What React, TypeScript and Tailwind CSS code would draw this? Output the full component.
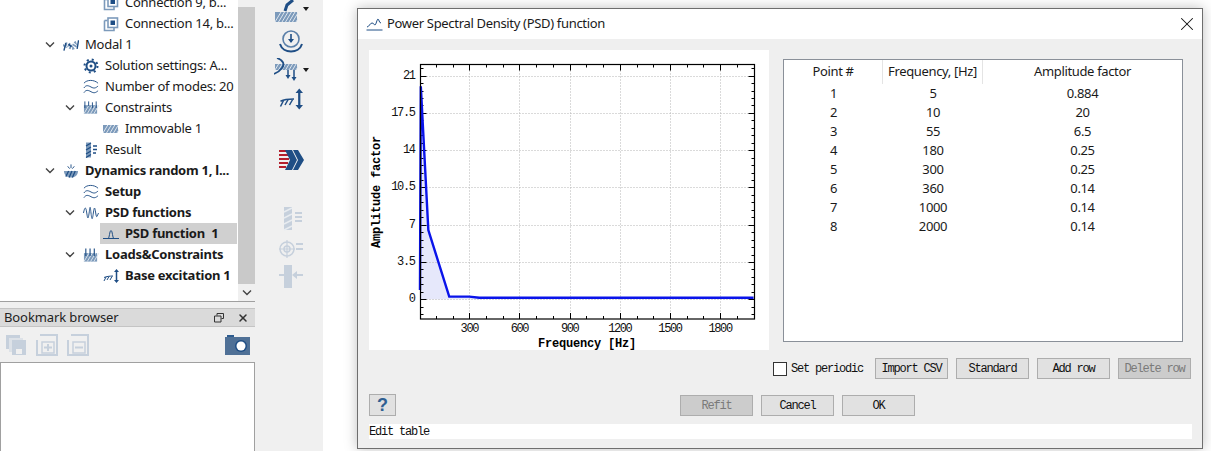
import React from 'react';
import { X } from 'lucide-react';

const BLUE = '#1f4e85';
const MID = '#7c9abb';
const PALE = '#c6d0dc';

const Hatch = ({ x, y, w, h }: { x: number; y: number; w: number; h: number }) => {
  const lines = [];
  for (let i = 0; i < w; i += 3.5) {
    lines.push(<line key={i} x1={x + i} y1={y + h} x2={x + i + h * 0.6} y2={y} stroke="#dfe6ee" strokeWidth="1" />);
  }
  return (
    <g>
      <rect x={x} y={y} width={w} height={h} fill={MID} />
      {lines}
    </g>
  );
};

const ConnectionIcon = () => (
  <svg width="16" height="16" viewBox="0 0 16 16" fill="none">
    <path d="M1.500 4.500v10h9.500v-3" stroke={MID} strokeWidth="1.6" />
    <path d="M1.500 4.500h3" stroke={MID} strokeWidth="1.6" />
    <rect x="5" y="2" width="9.500" height="9.500" stroke={MID} strokeWidth="1.600" />
    <rect x="7.500" y="4.500" width="4.500" height="4.500" fill={BLUE} />
  </svg>
);
const ModalIcon = () => (
  <svg width="17" height="16" viewBox="0 0 17 16" fill="none">
    <path d="M1.500 10C3 7 5 7 7 9s4 2 5 0 2-3 3-3" stroke={MID} strokeWidth="5" strokeDasharray="1.500 1" />
    <path d="M1 14l2-8M15 12l1.500-9" stroke={BLUE} strokeWidth="1.500" />
    <path d="M6 7l3 3" stroke={BLUE} strokeWidth="2" />
  </svg>
);
const GearIcon = () => (
  <svg width="16" height="16" viewBox="0 0 16 16" fill="none">
    <circle cx="8" cy="8" r="4.500" stroke={BLUE} strokeWidth="2" />
    <circle cx="8" cy="8" r="6.500" stroke={BLUE} strokeWidth="2" strokeDasharray="2 3.100" />
    <circle cx="8" cy="8" r="1.500" fill={BLUE} />
  </svg>
);
const WavesIcon = () => (
  <svg width="17" height="16" viewBox="0 0 17 16" fill="none" stroke={BLUE} strokeWidth="1">
    <path d="M1 4C4 0 12 0 16 4" />
    <path d="M1 9c2-3 4-3 7.500-1s5 1 7.500-1" />
    <path d="M1 14c2-3 4-3 7.500-1s5 1 7.500-1" />
  </svg>
);
const ConstraintsIcon = () => (
  <svg width="17" height="16" viewBox="0 0 17 16" fill="none">
    <Hatch x={1} y={5} w={14} h={9} />
    <path d="M2 1v7M6 1v5M10 2v6M14 1v7" stroke={BLUE} strokeWidth="1" />
  </svg>
);
const ImmovableIcon = () => (
  <svg width="16" height="16" viewBox="0 0 16 16" fill="none">
    <Hatch x={0} y={4} w={15} h={8} />
  </svg>
);
const ResultIcon = () => (
  <svg width="16" height="16" viewBox="0 0 16 16" fill="none">
    <rect x="3" y="0.500" width="5" height="15" fill={MID} />
    <path d="M3 4l5-3M3 8l5-3M3 12l5-3M3 15.500l5-3" stroke={BLUE} strokeWidth="1.300" />
    <path d="M10 4h4M10 7.500h4M10 11h3" stroke={BLUE} strokeWidth="1.500" />
  </svg>
);
const DynamicsIcon = () => (
  <svg width="17" height="16" viewBox="0 0 17 16" fill="none">
    <path d="M1 8h15c0 4-3 7-7.500 7S1 12 1 8z" fill={MID} />
    <path d="M3 14l3-6M6.500 15l3-7M10 15l3-7" stroke={BLUE} strokeWidth="1.300" />
    <path d="M8.500 1v4M5 3l2 2.500M12 3l-2 2.500" stroke={BLUE} strokeWidth="1" />
  </svg>
);
const PsdWaveIcon = () => (
  <svg width="17" height="16" viewBox="0 0 17 16" fill="none" stroke={BLUE} strokeWidth="1">
    <path d="M0.500 8C2 1 3 1 4 8s1.500 7 2.500 0S7.500-1 8.500 8s1.500 7 2.500 0 1.500-7 2.500 0 1.500 3 3 0" />
  </svg>
);
const PsdPeakIcon = () => (
  <svg width="16" height="16" viewBox="0 0 16 16" fill="none" stroke={BLUE} strokeWidth="1">
    <path d="M0 12.500h16" />
    <path d="M5 12.500c1.500 0 1.500-8 3-8s1.500 8 3 8" />
  </svg>
);
const LoadsIcon = () => (
  <svg width="17" height="16" viewBox="0 0 17 16" fill="none">
    <Hatch x={1} y={6} w={14} h={9} />
    <path d="M3 1v8M7.500 1v8M12 1v8" stroke={BLUE} strokeWidth="1.200" />
  </svg>
);
const BaseIcon = ({ size = 16 }: { size?: number }) => (
  <svg width={size} height={size} viewBox="0 0 16 16" fill="none" stroke={BLUE}>
    <path d="M1 9.500c2-1 6-1.500 9-1.500" strokeWidth="1" />
    <path d="M1 13l2-4M4 12l2-3.500M7 12l2-3.500" strokeWidth="1" />
    <path d="M13.500 3v10" strokeWidth="1.500" />
    <path d="M11 4l2.500-3L16 4zM11 12l2.500 3 2.500-3z" fill={BLUE} stroke="none" />
  </svg>
);

type TreeRow = {
  label: string;
  depth: 0 | 1 | 2;
  open?: boolean;
  bold?: boolean;
  selected?: boolean;
  icon: React.ReactNode;
};

const rows: TreeRow[] = [
  { label: 'Connection 9, b...', depth: 2, icon: <ConnectionIcon /> },
  { label: 'Connection 14, b...', depth: 2, icon: <ConnectionIcon /> },
  { label: 'Modal 1', depth: 0, open: true, icon: <ModalIcon /> },
  { label: 'Solution settings: A...', depth: 1, icon: <GearIcon /> },
  { label: 'Number of modes: 20', depth: 1, icon: <WavesIcon /> },
  { label: 'Constraints', depth: 1, open: true, icon: <ConstraintsIcon /> },
  { label: 'Immovable 1', depth: 2, icon: <ImmovableIcon /> },
  { label: 'Result', depth: 1, icon: <ResultIcon /> },
  { label: 'Dynamics random 1, l...', depth: 0, open: true, bold: true, icon: <DynamicsIcon /> },
  { label: 'Setup', depth: 1, bold: true, icon: <WavesIcon /> },
  { label: 'PSD functions', depth: 1, open: true, bold: true, icon: <PsdWaveIcon /> },
  { label: 'PSD function  1', depth: 2, bold: true, selected: true, icon: <PsdPeakIcon /> },
  { label: 'Loads&Constraints', depth: 1, open: true, bold: true, icon: <LoadsIcon /> },
  { label: 'Base excitation 1', depth: 2, bold: true, icon: <BaseIcon /> },
];

const depthPad = { 0: 'pl-[44px]', 1: 'pl-[64px]', 2: 'pl-[84px]' };

const Chevron = () => (
  <svg width="12" height="8" viewBox="0 0 12 8" fill="none" stroke="#444" strokeWidth="1.400">
    <path d="M2 1.500l4 4 4-4" />
  </svg>
);

const Tree = () => (
  <div className="relative h-[302px] overflow-hidden border-b border-[#a0a0a0] bg-white">
    <div className="-mt-[8px] pr-[18px] font-['Noto_Sans',sans-serif] text-[13px] tracking-[-0.25px] text-[#1a1a1a]">
      {rows.map((r) => (
        <div key={r.label} className={`flex h-[21px] items-center ${depthPad[r.depth]}`}>
          <div className="flex w-[16px] shrink-0 items-center">{r.open && <Chevron />}</div>
          <div className={`flex h-full flex-1 items-center whitespace-pre pl-[3px] ${r.selected ? 'bg-[#d0d0d0]' : ''}`}>
            <span className="flex w-[16px] shrink-0 justify-center">{r.icon}</span>
            <span className={`ml-[6px] ${r.bold ? 'font-bold' : ''}`}>{r.label}</span>
          </div>
        </div>
      ))}
    </div>
    <div className="absolute right-0 top-0 flex h-full w-[17px] flex-col bg-[#f0f0f0]">
      <div className="mt-[7px] h-[277px] bg-[#c9c9c9]" />
      <div className="flex flex-1 items-center justify-center">
        <Chevron />
      </div>
    </div>
  </div>
);

const CopyIcon = () => (
  <svg width="22" height="22" viewBox="0 0 22 22">
    <rect x="1" y="1" width="14" height="14" fill={PALE} />
    <rect x="4" y="4" width="14" height="14" fill="#dde2e8" />
    <rect x="7" y="6" width="14" height="15" fill={PALE} />
    <rect x="11" y="15" width="6" height="5" fill="#f0f0f0" />
  </svg>
);
const BoxIcon = ({ plus }: { plus?: boolean }) => (
  <svg width="22" height="22" viewBox="0 0 22 22" fill="none" stroke={PALE} strokeWidth="2">
    <path d="M4 1h17v20H4" />
    <path d="M1 6v15h3" />
    <path d="M6 8h12v11H6z" strokeWidth="1.500" />
    <path d="M8 13.500h8" strokeWidth="2" />
    {plus && <path d="M12 10v7" strokeWidth="2" />}
  </svg>
);
const CameraIcon = () => (
  <svg width="25" height="20" viewBox="0 0 25 20">
    <rect x="2" y="0" width="7" height="3" fill="#2d5c8f" />
    <rect x="0" y="2" width="25" height="18" fill="#4f7096" />
    <circle cx="16" cy="11" r="6" fill="#1f4e85" />
    <circle cx="16" cy="11" r="4.500" fill="#ffffff" />
  </svg>
);

const BookmarkPanel = () => (
  <div className="flex flex-1 flex-col bg-[#f0f0f0] pt-[6px]">
    <div className="flex h-[19px] items-center justify-between border-y border-[#c4c4c4] bg-[#dadada] pl-[4px] pr-[6px] font-['Noto_Sans',sans-serif] text-[13px] tracking-[-0.1px] text-[#222]">
      <span>Bookmark browser</span>
      <div className="flex items-center gap-[13px]">
        <svg width="10" height="10" viewBox="0 0 10 10" fill="none" stroke="#333">
          <path d="M3 2.500V.500h6.500v5H7.500M.500 3h6.500v6H.500z" />
        </svg>
        <X size={12} strokeWidth={3} color="#333" />
      </div>
    </div>
    <div className="flex h-[35px] items-center pl-[5px] pr-[5px]">
      <CopyIcon />
      <span className="ml-[9px]"><BoxIcon plus /></span>
      <span className="ml-[9px]"><BoxIcon /></span>
      <span className="ml-auto"><CameraIcon /></span>
    </div>
    <div className="flex-1 border border-b-0 border-[#a0a0a0] bg-white" />
  </div>
);

const DropArrow = ({ top }: { top: string }) => (
  <span className={`absolute left-[48px] h-0 w-0 border-x-[3.500px] border-t-[4px] border-x-transparent border-t-[#1a1a1a] ${top}`} />
);

const Toolbar = () => (
  <div className="flex w-[68px] shrink-0 flex-col items-center bg-[#f0f0f0]">
    <div className="relative flex h-[24px] w-full justify-center pr-[7px]">
      <svg width="24" height="22" viewBox="0 0 24 22" fill="none">
        <Hatch x={1} y={12} w={22} h={10} />
        <path d="M11 11l2-6 6-5" stroke={BLUE} strokeWidth="3" />
      </svg>
      <DropArrow top="top-[7px]" />
    </div>
    <div className="mt-[4px] flex h-[26px] items-center pl-[4px]">
      <svg width="24" height="24" viewBox="0 0 24 24" fill="none" stroke={BLUE}>
        <circle cx="12" cy="10" r="8" strokeWidth="1.600" stroke="#5a7fa8" />
        <path d="M1 15c3 10 19 10 22 0" strokeWidth="2" />
        <path d="M12 5v8" strokeWidth="1.600" />
        <path d="M9 10l3 4 3-4z" fill={BLUE} stroke="none" />
      </svg>
    </div>
    <div className="relative mt-[3px] flex h-[26px] w-full items-center justify-center pr-[7px]">
      <svg width="24" height="24" viewBox="0 0 24 24" fill="none">
        <Hatch x={1} y={6} w={22} h={6} />
        <path d="M3 0c6 2 8 6 5 10S3 15 0 16" stroke={BLUE} strokeWidth="1.800" />
        <path d="M14 12v6M20 12v8" stroke={BLUE} strokeWidth="1.500" />
        <path d="M11.500 17l2.500 4 2.500-4zM17.500 19l2.500 4 2.500-4z" fill={BLUE} />
      </svg>
      <DropArrow top="top-[11px]" />
    </div>
    <div className="mt-[3px] flex h-[26px] items-center pl-[4px]">
      <BaseIcon size={24} />
    </div>
    <div className="mt-[35px] flex h-[26px] items-center pl-[4px]">
      <svg width="25" height="20" viewBox="0 0 25 20">
        <path d="M0 1h8M0 5h9M0 9h10M0 13h9M0 17h7" stroke="#b3202e" strokeWidth="2" />
        <path d="M6 0h7l5 10-5 10H6l5-10zM14 0h5l6 10-6 10h-5l5-10z" fill={BLUE} />
      </svg>
    </div>
    <div className="mt-[34px] flex h-[24px] items-center pl-[8px]">
      <svg width="20" height="24" viewBox="0 0 20 24" fill="none">
        <rect x="1" y="0" width="8" height="23" fill={PALE} />
        <path d="M1 5l8-4M1 11l8-4M1 17l8-4M1 23l8-4" stroke="#e8ecf0" strokeWidth="1.500" />
        <path d="M12 6h7M12 10h7M12 14h7" stroke={PALE} strokeWidth="2" />
      </svg>
    </div>
    <div className="mt-[6px] flex h-[24px] items-center pl-[4px]">
      <svg width="24" height="18" viewBox="0 0 24 18" fill="none" stroke={PALE}>
        <circle cx="8" cy="9" r="7" strokeWidth="1.500" />
        <circle cx="8" cy="9" r="3" strokeWidth="1.500" />
        <path d="M8 0v18M0 9h16" strokeWidth="1.200" />
        <path d="M17 4h7M17 9h7" strokeWidth="2" />
      </svg>
    </div>
    <div className="mt-[4px] flex h-[24px] items-center pl-[4px]">
      <svg width="24" height="24" viewBox="0 0 24 24" fill="none">
        <rect x="5" y="0" width="8" height="23" fill={PALE} />
        <path d="M0 10h8M24 10h-9" stroke={PALE} strokeWidth="2" />
        <path d="M6 6l4 4-4 4zM13 10l5-4v8z" fill={PALE} />
      </svg>
    </div>
  </div>
);

// page coordinates of the plot, taken from the axis labels
const fx = (f: number) => 469.3 + (f - 300) * 0.1672;
const fy = (v: number) => 299.3 - 10.65 * v;
const snap = (n: number) => Math.round(n) + 0.5;
const points = [
  [5, 0.884],
  [10, 20],
  [55, 6.5],
  [180, 0.25],
  [300, 0.25],
  [360, 0.14],
  [1000, 0.14],
  [2000, 0.14],
];

const Plot = () => {
  const left = 420.5;
  const right = 754.5;
  const top = 64.5;
  const bottom = 319;
  const xMajor = [300, 600, 900, 1200, 1500, 1800];
  const yMajor = [0, 3.5, 7, 10.5, 14, 17.5, 21];
  const xMinor = Array.from({ length: 19 }, (_, i) => (i + 1) * 100);
  const yMinor = Array.from({ length: 38 }, (_, i) => -2.8 + i * 0.7);
  const line = points.map(([f, v]) => `${fx(f)},${fy(v)}`).join(' ');

  return (
    <div className="h-[300px] w-[400px] shrink-0 bg-white">
      <svg width="400" height="300" viewBox="369 50 400 300" className="block">
        <polygon points={`${fx(5)},${fy(0)} ${line} ${fx(2000)},${fy(0)}`} fill="#e6e8fb" />
        <g stroke="#b4b4b4" strokeWidth="1" strokeDasharray="1 2">
          {xMajor.map((f) => <line key={f} x1={snap(fx(f))} x2={snap(fx(f))} y1={top} y2={bottom} />)}
          {yMajor.map((v) => <line key={v} x1={left} x2={right} y1={snap(fy(v))} y2={snap(fy(v))} />)}
        </g>
        <g stroke="#000" strokeWidth="1">
          {xMinor.map((f) => (
            <g key={f}>
              <line x1={snap(fx(f))} x2={snap(fx(f))} y1={top} y2={top + (f % 300 === 0 ? 6 : 3)} />
              <line x1={snap(fx(f))} x2={snap(fx(f))} y1={bottom} y2={bottom - (f % 300 === 0 ? 6 : 3)} />
            </g>
          ))}
          {yMinor.filter((v) => fy(v) > top && fy(v) < bottom).map((v) => {
            const major = Math.abs(v / 3.5 - Math.round(v / 3.5)) < 0.01;
            return (
              <g key={v}>
                <line x1={left} x2={left + (major ? 6 : 3)} y1={snap(fy(v))} y2={snap(fy(v))} />
                <line x1={right} x2={right - (major ? 6 : 3)} y1={snap(fy(v))} y2={snap(fy(v))} />
              </g>
            );
          })}
        </g>
        <polyline points={line} fill="none" stroke="#0a14ea" strokeWidth="2.400" />
        <rect x={left} y={top} width={right - left} height={bottom - top} fill="none" stroke="#000" strokeWidth="1.200" />
        <g className="font-['Liberation_Mono',monospace] text-[12px] tracking-[-1.400px]" fill="#111">
          {yMajor.map((v) => (
            <text key={v} x="414.500" y={fy(v) + 3} textAnchor="end">{v}</text>
          ))}
          {xMajor.map((f) => (
            <text key={f} x={fx(f)} y="332" textAnchor="middle">{f}</text>
          ))}
        </g>
        <g className="font-['Liberation_Mono',monospace] text-[12px] font-bold tracking-[-0.2px]" fill="#000">
          <text x="587" y="347" textAnchor="middle">Frequency [Hz]</text>
          <text transform="translate(380 192) rotate(-90)" textAnchor="middle">Amplitude factor</text>
        </g>
      </svg>
    </div>
  );
};

const tableData = [
  ['1', '5', '0.884'],
  ['2', '10', '20'],
  ['3', '55', '6.5'],
  ['4', '180', '0.25'],
  ['5', '300', '0.25'],
  ['6', '360', '0.14'],
  ['7', '1000', '0.14'],
  ['8', '2000', '0.14'],
];

const PointTable = () => (
  <div className="ml-[14px] mt-[9px] h-[283px] w-[400px] border border-[#8a9099] bg-white font-['Noto_Sans',sans-serif] text-[13px] tracking-[-0.35px] text-[#1a1a1a]">
    <div className="grid h-[24px] grid-cols-[99px_100px_1fr] items-center text-center">
      <div className="flex h-full items-center justify-center border-r border-[#e4e4e4]">Point #</div>
      <div className="flex h-full items-center justify-center border-r border-[#e4e4e4]">Frequency, [Hz]</div>
      <div className="flex h-full items-center justify-center">Amplitude factor</div>
    </div>
    {tableData.map(([p, f, a]) => (
      <div key={p} className="grid h-[19px] grid-cols-[99px_100px_1fr] items-center text-center">
        <div>{p}</div>
        <div>{f}</div>
        <div>{a}</div>
      </div>
    ))}
  </div>
);

const DlgButton = ({ label, disabled }: { label: string; disabled?: boolean }) => (
  <button
    className={`h-[21px] w-[73px] border border-[#adadad] pt-[1px] font-['Liberation_Mono',monospace] text-[12px] tracking-[-1.2px] ${
      disabled ? 'bg-[#cccccc] text-[#7a7a7a]' : 'bg-[#e1e1e1] text-[#111]'
    }`}
  >
    {label}
  </button>
);

const Dialog = () => (
  <div className="flex h-[441px] w-[846px] flex-col border border-[#6e6e6e] bg-[#efefef] shadow-[0_0_12px_rgba(0,0,0,0.25)]">
    <div className="flex h-[30px] shrink-0 items-center bg-white pl-[8px] pr-[4px] font-['Noto_Sans',sans-serif] text-[13px] tracking-[-0.32px] text-[#1a1a1a]">
      <svg width="17" height="14" viewBox="0 0 17 14" fill="none" stroke={BLUE} strokeWidth="1">
        <path d="M0.500 13h16" />
        <path d="M1 10c2 0 3-4 5-4s2 2 3 2 2-6 3-6 1 4 3 4" />
      </svg>
      <span className="ml-[4px]">Power Spectral Density (PSD) function</span>
      <X size={22} strokeWidth={1.100} color="#111" className="ml-auto" />
    </div>
    <div className="flex pl-[11px] pt-[11px]">
      <Plot />
      <PointTable />
    </div>
    <div className="mt-[8px] flex items-center pl-[415px]">
      <span className="h-[14px] w-[14px] border border-[#333] bg-white" />
      <span className="ml-[4px] font-['Liberation_Mono',monospace] text-[12px] tracking-[-1.2px] text-[#111]">Set periodic</span>
      <div className="ml-[12px] flex gap-[8px]">
        <DlgButton label="Import CSV" />
        <DlgButton label="Standard" />
        <DlgButton label="Add row" />
        <DlgButton label="Delete row" disabled />
      </div>
    </div>
    <div className="mt-[15px] flex items-center pl-[11px]">
      <div className="flex h-[22px] w-[27px] items-center justify-center border border-[#adadad] bg-[#e1e1e1] font-['Liberation_Sans',sans-serif] text-[18px] font-bold text-[#2f5f92]">?</div>
      <div className="ml-[284px] flex gap-[8px]">
        <DlgButton label="Refit" disabled />
        <DlgButton label="Cancel" />
        <DlgButton label="OK" />
      </div>
    </div>
    <div className="ml-[11px] mt-[8px] h-[15px] w-[823px] bg-white pt-[1px] font-['Liberation_Mono',monospace] text-[12px] leading-[15px] tracking-[-1.2px] text-[#111]">
      Edit table
    </div>
  </div>
);

export default function App() {
  return (
    <div className="flex h-[451px] w-[1211px] overflow-hidden bg-white">
      <div className="flex w-[255px] shrink-0 flex-col">
        <Tree />
        <BookmarkPanel />
      </div>
      <Toolbar />
      <div className="flex-1 pl-[34px] pt-[8px]">
        <Dialog />
      </div>
    </div>
  );
}
